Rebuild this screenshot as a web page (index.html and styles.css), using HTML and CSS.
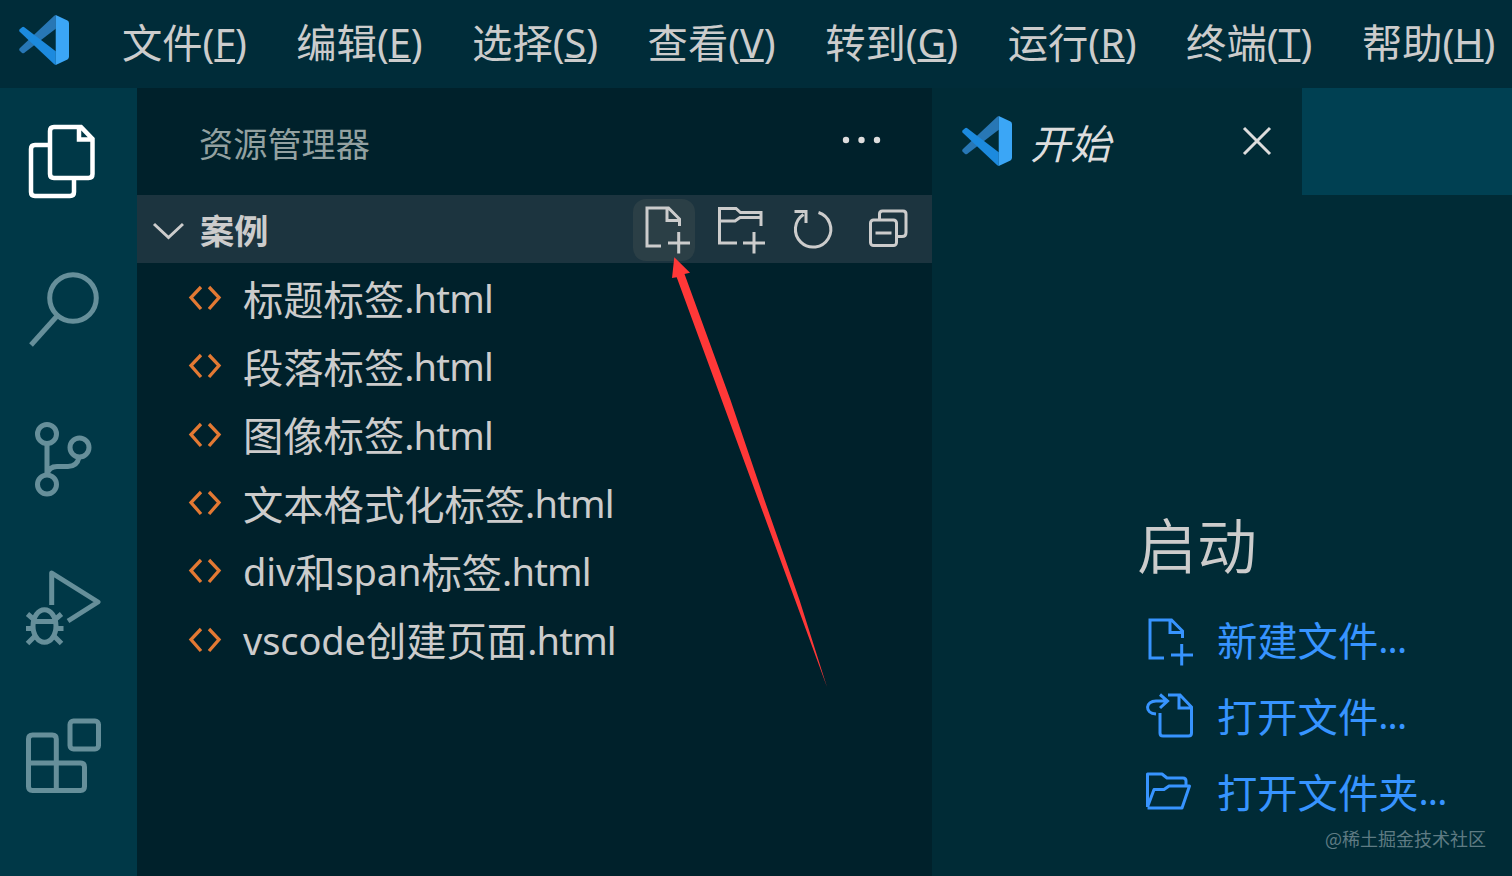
FILE: index.html
```html
<!DOCTYPE html>
<html lang="zh-CN">
<head>
    <meta charset="UTF-8">
    <meta name="viewport" content="width=device-width, initial-scale=1.0">
    <title>开始 - 案例</title>
    <link rel="stylesheet" href="styles.css">
</head>
<body>
    <!-- Shared icons -->
    <svg class="defs" width="0" height="0">
        <symbol id="logo" viewBox="0 0 49 49">
            <path fill="#2877b5" d="M.7 32.5 34.5.8 36 0v13.5L5 37.2q-1 .6-2 0L.7 35q-1-1.200 0-2.500z"/>
            <path fill="#1c8ade" d="M.7 16.500q-1-1.300 0-2.500L3 12q1-.8 2.200 0L36 35.500V49l-1.500-.8z"/>
            <path fill="#3ba6f6" d="M36 0 47.500 5.500Q49 6.300 49 8v33q0 1.800-1.500 2.500L36 49z"/>
        </symbol>
        <symbol id="new-file" viewBox="0 0 48 50">
            <path d="M17 41H3V3h21.500L35.500 14v7M23 3v12.500h12.500M34.700 27v21.500M24 38h22"/>
        </symbol>
        <symbol id="code" viewBox="0 0 34 28">
            <path d="M13 3 3 13.500 13 25M21 3l10 10.500L21 25"/>
        </symbol>
    </svg>

    <div class="window">
        <div class="menubar">
            <svg class="logo"><use href="#logo"/></svg>
            <ul class="menu">
                <li>文件<span class="en">(<u>F</u>)</span></li>
                <li>编辑<span class="en">(<u>E</u>)</span></li>
                <li>选择<span class="en">(<u>S</u>)</span></li>
                <li>查看<span class="en">(<u>V</u>)</span></li>
                <li>转到<span class="en">(<u>G</u>)</span></li>
                <li>运行<span class="en">(<u>R</u>)</span></li>
                <li>终端<span class="en">(<u>T</u>)</span></li>
                <li>帮助<span class="en">(<u>H</u>)</span></li>
            </ul>
        </div>

        <div class="workbench">
            <div class="activity-bar">
                <!-- Explorer -->
                <svg class="activity active" viewBox="0 88 137 149">
                    <path d="M54 127h27l11.500 12v35q0 4-4 4H54q-4 0-4-4v-43q0-4 4-4zM79 127v12.500h13M50 145H35q-4 0-4 4v43q0 4 4 4h35q4 0 4-4v-13"/>
                </svg>
                <!-- Search -->
                <svg class="activity" viewBox="0 237 137 149">
                    <circle cx="73" cy="298" r="23.300"/>
                    <path d="M57.500 315.500 31 345"/>
                </svg>
                <!-- Source control -->
                <svg class="activity" viewBox="0 386 137 149">
                    <circle cx="47" cy="434" r="9.500"/>
                    <circle cx="79.500" cy="447.500" r="9.500"/>
                    <circle cx="47" cy="484.500" r="9.500"/>
                    <path d="M47 444v31M79 457.500q-2 9-11 9H57q-8 0-10 8"/>
                </svg>
                <!-- Run and debug -->
                <svg class="activity" viewBox="0 535 137 149">
                    <path stroke-linejoin="round" d="M51.700 605v-32L98 602l-30 19"/>
                    <ellipse cx="44.500" cy="626" rx="11.500" ry="16.300"/>
                    <path d="M33 621.500h23M27.500 614l7 6M61.500 614l-7 6M26 628.500h7M56 628.500h7.500M27.500 643.500l7-7M61.500 643.500l-7-7"/>
                </svg>
                <!-- Extensions -->
                <svg class="activity" viewBox="0 684 137 149">
                    <path d="M56.300 790.500V739q0-4-4-4H32.500q-4 0-4 4v47.500q0 4 4 4h48q4 0 4-4V767q0-4-4-4h-52"/>
                    <rect x="70" y="721" width="28.500" height="28" rx="3.500"/>
                </svg>
            </div>

            <div class="sidebar">
                <div class="sidebar-title">
                    <span>资源管理器</span>
                    <svg class="more" width="40" height="10"><circle cx="4" cy="5" r="3.200"/><circle cx="19.500" cy="5" r="3.200"/><circle cx="35" cy="5" r="3.200"/></svg>
                </div>
                <div class="section">
                    <svg class="chevron" width="32" height="18"><path d="M2 2l14.500 13.500L31 2"/></svg>
                    <span class="section-name">案例</span>
                    <div class="actions">
                        <div class="action hover"><svg width="48" height="50"><use href="#new-file"/></svg></div>
                        <svg width="50" height="50"><path d="M22 38H4.500V3.500H21l4.500 4h20.500V21M4.500 16h15.500l5-3.500h21M39 27v21.500M28 38h22"/></svg>
                        <svg class="refresh" width="44" height="50"><path d="M27.500 7.500A17.700 17.700 0 1 1 12.500 9.500M3.500 6.500h11.500v11.500"/></svg>
                        <svg width="44" height="50"><rect x="4.500" y="15" width="26" height="25.500" rx="3"/><path d="M13.500 14.500V9q0-3 3-3H37q3 0 3 3V27.500q0 4-4 4h-5M9.500 28h16"/></svg>
                    </div>
                </div>
                <ul class="files">
                    <li><svg><use href="#code"/></svg>标题标签<span class="en">.html</span></li>
                    <li><svg><use href="#code"/></svg>段落标签<span class="en">.html</span></li>
                    <li><svg><use href="#code"/></svg>图像标签<span class="en">.html</span></li>
                    <li><svg><use href="#code"/></svg>文本格式化标签<span class="en">.html</span></li>
                    <li><svg><use href="#code"/></svg><span class="en word">div</span>和<span class="en word">span</span>标签<span class="en">.html</span></li>
                    <li><svg><use href="#code"/></svg><span class="en word">vscode</span>创建页面<span class="en">.html</span></li>
                </ul>
            </div>

            <div class="editor">
                <div class="tabs">
                    <div class="tab">
                        <svg class="logo"><use href="#logo"/></svg>
                        <span class="tab-name">开始</span>
                        <svg class="close" width="30" height="30"><path d="M2 2l26 26M28 2 2 28"/></svg>
                    </div>
                </div>
                <div class="welcome">
                    <h2>启动</h2>
                    <ul class="links">
                        <li><svg width="52" height="50"><use href="#new-file" x="2" y="1" width="48" height="50"/></svg>新建文件<span class="en">...</span></li>
                        <li><svg width="52" height="50"><path d="M23 3h12l11.500 12v26q0 3-3 3H18q-3 0-3-3V21M34 3v13h12.500M11 22C-1 21 .500 9 11 9h11M15 2.500l7.500 6.500-7.500 7"/></svg>打开文件<span class="en">...</span></li>
                        <li><svg width="52" height="50"><path stroke-linejoin="round" d="M2.500 39V6H17l5 4h16q3 0 3 3v5.500M2.500 39 9 21.500h10l5-3.500h20.500L37 40H2.500"/></svg>打开文件夹<span class="en">...</span></li>
                    </ul>
                </div>
            </div>
        </div>

        <!-- Pointer to the "new file" button -->
        <svg class="arrow" width="160" height="434"><path d="M6.300 1.300 22 16.700 16.500 18 62.500 144 96.500 244 131.500 344 159 431 8.700 21.300 4 22z"/></svg>
        <div class="watermark">@稀土掘金技术社区</div>
    </div>
</body>
</html>
```

FILE: styles.css
```css
* {
    box-sizing: border-box;
}

body {
    margin: 0;
    font-family: "Noto Sans CJK SC", sans-serif;
    font-size: 40.3px;
    color: #cccccc;
    background-color: #002b36;
}

ul {
    list-style: none;
    margin: 0;
    padding: 0;
}

svg {
    display: block;
    flex-shrink: 0;
    fill: none;
    stroke: currentColor;
    stroke-width: 3;
}

.defs {
    position: absolute;
}

.en {
    font-family: "Noto Sans", sans-serif;
    font-size: 38px;
    letter-spacing: -0.8px;
}

.en.word {
    letter-spacing: -0.1px;
}

.window {
    position: relative;
    display: flex;
    flex-direction: column;
    height: 876px;
    overflow: hidden;
}

.logo {
    width: 50px;
    height: 50px;
    stroke: none;
}

/* Menu bar */
.menubar {
    display: flex;
    align-items: center;
    height: 88px;
    padding: 0 0 8px 19px;
    background-color: #002c39;
}

.menu {
    display: flex;
    gap: 49.5px;
    margin-left: 53px;
    padding-top: 3px;
    line-height: 58px;
    white-space: nowrap;
}

.menu .en {
    font-size: 39.5px;
    letter-spacing: 0;
}

.menu u {
    text-decoration-thickness: 3px;
    text-underline-offset: 1px;
    text-decoration-skip-ink: none;
}

.workbench {
    display: flex;
    flex: 1;
}

/* Activity bar */
.activity-bar {
    width: 137px;
    background-color: #003847;
}

.activity {
    width: 137px;
    height: 149px;
    color: #668f9a;
    stroke-width: 5;
}

.activity.active {
    color: #ffffff;
    stroke-width: 4.5;
}

/* Sidebar */
.sidebar {
    width: 795px;
    background-color: #00212b;
}

.sidebar-title {
    display: flex;
    align-items: center;
    justify-content: space-between;
    height: 107px;
    padding: 0 50px 0 62px;
    font-size: 34.2px;
    color: #93a1a1;
}

.more {
    margin-bottom: 3px;
    fill: #dddddd;
    stroke: none;
}

.section {
    display: flex;
    align-items: center;
    height: 68px;
    padding: 0 22px 0 15px;
    background-color: #1c343f;
}

.chevron {
    margin-top: 3px;
}

.section-name {
    margin-left: 16px;
    font-size: 34.2px;
    font-weight: bold;
}

.actions {
    display: flex;
    align-items: center;
    gap: 26px;
    margin-left: auto;
    padding-top: 2px;
}

.action.hover {
    display: flex;
    align-items: center;
    justify-content: center;
    width: 62px;
    height: 62px;
    margin-right: -6px;
    padding-left: 8px;
    border-radius: 13px;
    background-color: #2b3f46;
}

.refresh {
    margin-right: 5px;
}

.files li {
    display: flex;
    align-items: center;
    height: 68.3px;
    padding-left: 51px;
    white-space: nowrap;
}

.files .en {
    padding-top: 2px;
}

.files svg {
    width: 34px;
    height: 28px;
    margin: 2px 21px 0 0;
    color: #e37933;
    stroke-width: 3.3;
}

/* Editor */
.editor {
    flex: 1;
}

.tabs {
    height: 107px;
    background-color: #004052;
}

.tab {
    display: flex;
    align-items: center;
    width: 370px;
    height: 107px;
    padding: 0 30px 2px;
    background-color: #002b36;
}

.tab-name {
    margin-left: 18px;
    padding-top: 2px;
    font-style: italic;
    color: #dddddd;
}

.close {
    margin-left: auto;
    color: #dddddd;
}

.welcome {
    padding: 304px 0 0 205px;
}

.welcome h2 {
    margin: 0;
    height: 101px;
    font-size: 60px;
    font-weight: 350;
    line-height: 88px;
}

.links li {
    display: flex;
    align-items: center;
    height: 76px;
    padding-left: 8px;
    color: #3794ff;
    white-space: nowrap;
}

.links svg {
    margin: 6px 20px 0 0;
}

/* Overlays */
.arrow {
    position: absolute;
    left: 668px;
    top: 256px;
    fill: #ff3838;
    stroke: none;
}

.watermark {
    position: absolute;
    right: 26px;
    bottom: 26px;
    font-size: 18px;
    line-height: 24px;
    color: #5f7b83;
}
```
